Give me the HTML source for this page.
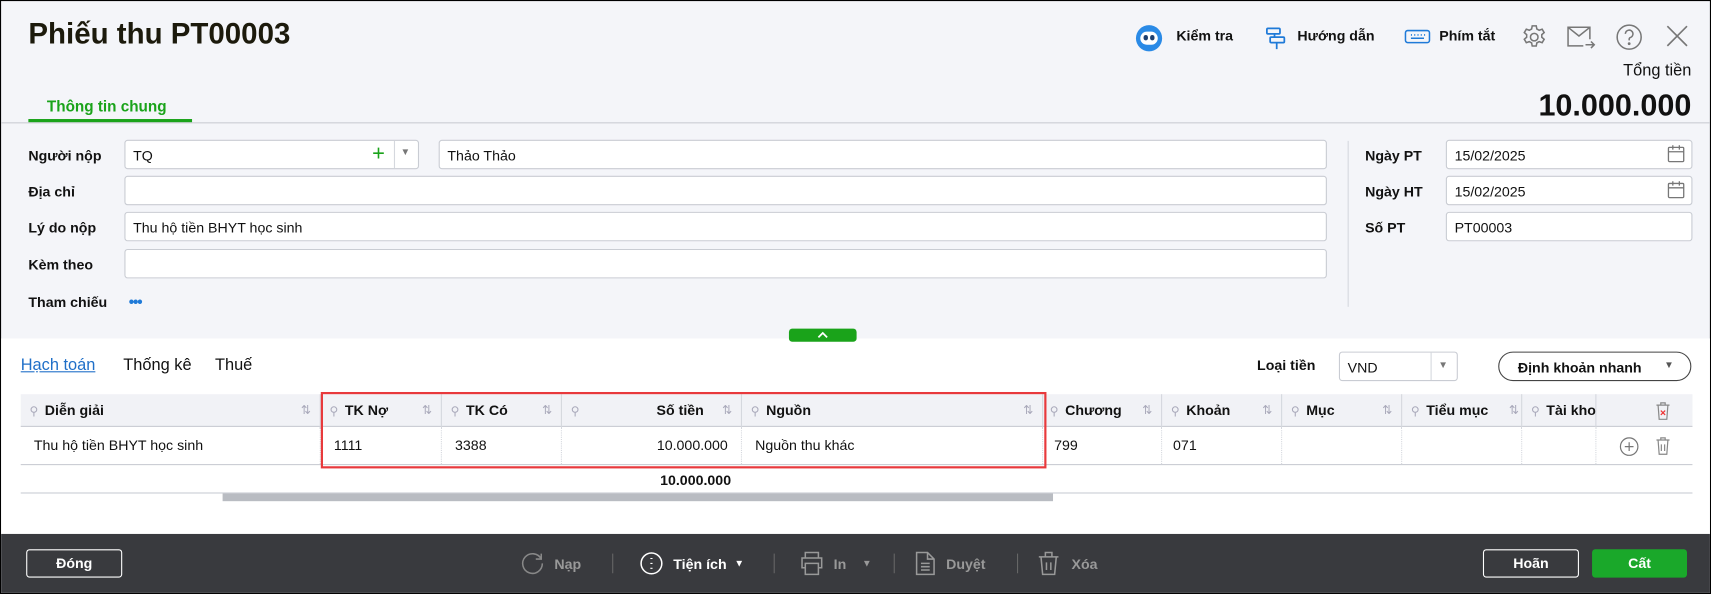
<!DOCTYPE html>
<html><head><meta charset="utf-8"><style>
*{box-sizing:border-box;margin:0;padding:0}
html,body{width:1711px;height:594px;overflow:hidden;background:#000}
#w{position:absolute;left:0;top:0;width:1568px;height:544px;transform:scale(1.0912,1.0919);transform-origin:0 0;background:#f4f5f9;font-family:"Liberation Sans",sans-serif;color:#111;font-size:13px;border:1px solid #000;overflow:hidden}
.a{position:absolute;white-space:nowrap}
.lb{font-weight:bold;font-size:13px}
.in{position:absolute;background:#fff;border:1px solid #c9ccd3;border-radius:3px;height:27px;padding:6px 7px;font-size:13px}
.th{position:absolute;top:0;height:30px;border-right:1px solid #d5d8de;font-weight:bold;font-size:13px;line-height:30px}
.td{position:absolute;top:0;height:34px;border-right:1px dotted #d5d8de;font-size:13px;line-height:34px}
.pin{color:#aab;font-weight:normal;font-size:11px;margin:0 6px 0 8px}
.srt{position:absolute;right:8px;color:#aab;font-weight:normal;font-size:11px}
.ft{color:#fff;font-size:13px;font-weight:bold}
</style></head><body><div id="w">
<div class="a" style="left:25px;top:15px;font-size:27px;font-weight:bold;color:#1c1a0c">Phiếu thu PT00003</div>
<div class="a" style="left:1040px;top:22px;width:24px;height:24px;border-radius:50%;background:#2a8ae6"></div>
<div class="a" style="left:1044px;top:28px;width:16px;height:12px;border-radius:6px;background:#fff"></div>
<div class="a" style="left:1047px;top:31px;width:4px;height:5px;border-radius:2px;background:#1c3f70"></div>
<div class="a" style="left:1053px;top:31px;width:4px;height:5px;border-radius:2px;background:#1c3f70"></div>
<div class="a" style="left:1077px;top:24px;font-size:13px;font-weight:bold">Kiểm tra</div>
<svg class="a" style="left:1156px;top:22px" width="24" height="24" viewBox="0 0 24 24" fill="none" stroke="#1f7ad8" stroke-width="1.6"><rect x="4" y="3" width="12" height="5" rx="1"/><rect x="7" y="11" width="13" height="5" rx="1"/><path d="M11 8v3M13 16v6"/></svg>
<div class="a" style="left:1188px;top:24px;font-weight:bold">Hướng dẫn</div>
<svg class="a" style="left:1286px;top:24px" width="24" height="20" viewBox="0 0 24 20" fill="none" stroke="#1f7ad8" stroke-width="1.4"><rect x="1" y="3" width="22" height="11" rx="2"/><path d="M6 7h1M9 7h1M12 7h1M15 7h1M18 7h1M6 10h12"/></svg>
<div class="a" style="left:1318px;top:24px;font-weight:bold">Phím tắt</div>
<svg class="a" style="left:1392px;top:20px" width="26" height="26" viewBox="0 0 24 24" fill="none" stroke="#777" stroke-width="1.3"><circle cx="12" cy="12" r="3.2"/><path d="M10.3 2.5h3.4l.5 2.6 2 1.1 2.5-.9 1.7 2.9-2 1.7v2.2l2 1.7-1.7 2.9-2.5-.9-2 1.1-.5 2.6h-3.4l-.5-2.6-2-1.1-2.5.9-1.7-2.9 2-1.7v-2.2l-2-1.7 1.7-2.9 2.5.9 2-1.1z"/></svg>
<svg class="a" style="left:1434px;top:20px" width="28" height="26" viewBox="0 0 28 26" fill="none" stroke="#777" stroke-width="1.4"><path d="M22 15V4H2v17h14M2 4l10 8 10-8M18 20h8M23 17l3 3-3 3"/></svg>
<svg class="a" style="left:1479px;top:20px" width="26" height="26" viewBox="0 0 26 26" fill="none" stroke="#777" stroke-width="1.4"><circle cx="13" cy="13" r="11"/><path d="M9.5 10a3.5 3.5 0 1 1 4.5 3.4c-.7.3-1 .8-1 1.6v1"/><circle cx="13" cy="19" r=".6" fill="#777"/></svg>
<svg class="a" style="left:1525px;top:21px" width="22" height="22" viewBox="0 0 22 22" stroke="#777" stroke-width="1.5"><path d="M2 2l18 18M20 2L2 20"/></svg>
<div class="a" style="right:17px;top:55px;font-size:15px">Tổng tiền</div>
<div class="a" style="right:17px;top:80px;font-size:28px;font-weight:bold">10.000.000</div>
<div class="a" style="left:42px;top:88px;font-size:14px;font-weight:bold;color:#1aa31a">Thông tin chung</div>
<div class="a" style="left:25px;top:108px;width:150px;height:3px;background:#1aa31a"></div>
<div class="a" style="left:0;top:111px;width:1568px;height:1px;background:#c9ccd3"></div>
<div class="a lb" style="left:25px;top:134px">Người nộp</div>
<div class="a lb" style="left:25px;top:167px">Địa chỉ</div>
<div class="a lb" style="left:25px;top:200px">Lý do nộp</div>
<div class="a lb" style="left:25px;top:234px">Kèm theo</div>
<div class="a lb" style="left:25px;top:268px">Tham chiếu</div>
<div class="a" style="left:117px;top:267px;color:#1f7ad8;font-size:14px;font-weight:bold;letter-spacing:-1px">•••</div>
<div class="in" style="left:113px;top:127px;width:270px">TQ</div>
<div class="a" style="left:340px;top:128px;color:#1aa31a;font-size:20px;line-height:24px">+</div>
<div class="a" style="left:360px;top:128px;width:1px;height:25px;background:#d5d8de"></div>
<div class="a" style="left:366px;top:133px;color:#777;font-size:9px">▼</div>
<div class="in" style="left:401px;top:127px;width:814px">Thảo Thảo</div>
<div class="in" style="left:113px;top:160px;width:1102px"></div>
<div class="in" style="left:113px;top:193px;width:1102px">Thu hộ tiền BHYT học sinh</div>
<div class="in" style="left:113px;top:227px;width:1102px"></div>
<div class="a" style="left:1234px;top:128px;width:1px;height:152px;background:#d5d8de"></div>
<div class="a lb" style="left:1250px;top:134px">Ngày PT</div>
<div class="a lb" style="left:1250px;top:167px">Ngày HT</div>
<div class="a lb" style="left:1250px;top:200px">Số PT</div>
<div class="in" style="left:1324px;top:127px;width:226px">15/02/2025</div>
<div class="in" style="left:1324px;top:160px;width:226px">15/02/2025</div>
<div class="in" style="left:1324px;top:193px;width:226px">PT00003</div>
<svg class="a" style="left:1526px;top:131px" width="18" height="18" viewBox="0 0 18 18" fill="none" stroke="#777" stroke-width="1.2"><rect x="2" y="3" width="14" height="13" rx="1"/><path d="M2 7h14M6 1v4M12 1v4"/></svg>
<svg class="a" style="left:1526px;top:164px" width="18" height="18" viewBox="0 0 18 18" fill="none" stroke="#777" stroke-width="1.2"><rect x="2" y="3" width="14" height="13" rx="1"/><path d="M2 7h14M6 1v4M12 1v4"/></svg>
<div class="a" style="left:0;top:309px;width:1568px;height:180px;background:#fff"></div>
<div class="a" style="left:722px;top:300px;width:62px;height:12px;border-radius:3px;background:#1aa31a"></div>
<svg class="a" style="left:747px;top:301px" width="12" height="9" viewBox="0 0 12 9" fill="none" stroke="#fff" stroke-width="1.6"><path d="M2 7l4-4 4 4"/></svg>
<div class="a" style="left:18px;top:325px;font-size:15px;color:#1f6fc8;text-decoration:underline">Hạch toán</div>
<div class="a" style="left:112px;top:325px;font-size:15px">Thống kê</div>
<div class="a" style="left:196px;top:325px;font-size:15px">Thuế</div>
<div class="a" style="left:1151px;top:326px;font-size:13px;font-weight:bold">Loại tiền</div>
<div class="in" style="left:1226px;top:321px;width:109px;height:27px">VND</div>
<div class="a" style="left:1310px;top:322px;width:1px;height:25px;background:#d5d8de"></div>
<div class="a" style="left:1317px;top:328px;color:#777;font-size:9px">▼</div>
<div class="a" style="left:1372px;top:321px;width:177px;height:27px;border:1px solid #444;border-radius:14px;padding:6px 0 0 17px;font-weight:bold">Định khoản nhanh</div>
<div class="a" style="left:1524px;top:328px;color:#555;font-size:9px">▼</div>
<div class="a" style="left:18px;top:360px;width:1532px;height:30px;background:#f1f2f6;border-bottom:1px solid #c9ccd3">
<div class="th" style="left:0;width:275px"><span class="pin">⚲</span>Diễn giải<span class="srt">⇅</span></div>
<div class="th" style="left:275px;width:111px"><span class="pin">⚲</span>TK Nợ<span class="srt">⇅</span></div>
<div class="th" style="left:386px;width:110px"><span class="pin">⚲</span>TK Có<span class="srt">⇅</span></div>
<div class="th" style="left:496px;width:165px"><span class="pin">⚲</span><span style="position:absolute;right:34px">Số tiền</span><span class="srt">⇅</span></div>
<div class="th" style="left:661px;width:276px"><span class="pin">⚲</span>Nguồn<span class="srt">⇅</span></div>
<div class="th" style="left:937px;width:109px"><span class="pin" style="margin-left:6px">⚲</span>Chương<span class="srt">⇅</span></div>
<div class="th" style="left:1046px;width:110px"><span class="pin">⚲</span>Khoản<span class="srt">⇅</span></div>
<div class="th" style="left:1156px;width:110px"><span class="pin">⚲</span>Mục<span class="srt">⇅</span></div>
<div class="th" style="left:1266px;width:110px"><span class="pin">⚲</span>Tiểu mục<span class="srt" style="right:2px">⇅</span></div>
<div class="th" style="left:1376px;width:68px;overflow:hidden"><span class="pin">⚲</span>Tài khoản</div>
<svg class="a" style="left:1498px;top:6px" width="14" height="18" viewBox="0 0 14 18" fill="none" stroke="#888" stroke-width="1.1"><path d="M1 4h12M5 4V2h4v2M2.5 4l1 13h7l1-13"/><path d="M5 9l4 4M9 9l-4 4" stroke="#e33"/></svg>
</div>
<div class="a" style="left:18px;top:390px;width:1532px;height:35px;border-bottom:1px solid #c9ccd3">
<div class="td" style="left:0;width:275px;padding-left:12px">Thu hộ tiền BHYT học sinh</div>
<div class="td" style="left:275px;width:111px;padding-left:12px">1111</div>
<div class="td" style="left:386px;width:110px;padding-left:12px">3388</div>
<div class="td" style="left:496px;width:165px;text-align:right;padding-right:12px">10.000.000</div>
<div class="td" style="left:661px;width:276px;padding-left:12px">Nguồn thu khác</div>
<div class="td" style="left:937px;width:109px;padding-left:10px">799</div>
<div class="td" style="left:1046px;width:110px;padding-left:10px">071</div>
<div class="td" style="left:1156px;width:110px"></div>
<div class="td" style="left:1266px;width:110px"></div>
<div class="td" style="left:1376px;width:68px"></div>
<svg class="a" style="left:1465px;top:9px" width="18" height="18" viewBox="0 0 18 18" fill="none" stroke="#777" stroke-width="1.1"><circle cx="9" cy="9" r="8"/><path d="M9 5v8M5 9h8"/></svg>
<svg class="a" style="left:1498px;top:8px" width="14" height="18" viewBox="0 0 14 18" fill="none" stroke="#888" stroke-width="1.1"><path d="M1 4h12M5 4V2h4v2M2.5 4l1 13h7l1-13M5.5 8v6M8.5 8v6"/></svg>
</div>
<div class="a" style="left:293px;top:358px;width:665px;height:70px;border:2px solid #e8393c"></div>
<div class="a" style="left:514px;top:431px;width:155px;text-align:right;font-weight:bold">10.000.000</div>
<div class="a" style="left:18px;top:450px;width:1532px;height:1px;background:#c9ccd3"></div>
<div class="a" style="left:203px;top:451px;width:761px;height:7px;background:#b9bcc2"></div>
<div class="a" style="left:0;top:488px;width:1568px;height:56px;background:#393a3e"></div>
<div class="a ft" style="left:23px;top:502px;width:88px;height:26px;border:1px solid #fff;border-radius:3px;text-align:center;line-height:24px">Đóng</div>
<svg class="a" style="left:476px;top:504px" width="22" height="22" viewBox="0 0 22 22" fill="none" stroke="#888" stroke-width="1.4"><path d="M19 7A9 9 0 1 0 20 11M19 2v5h-5"/></svg>
<div class="a" style="left:507px;top:508px;color:#999;font-weight:bold">Nạp</div>
<div class="a" style="left:560px;top:506px;width:1px;height:18px;background:#666"></div>
<svg class="a" style="left:585px;top:504px" width="22" height="22" viewBox="0 0 22 22" fill="none" stroke="#fff" stroke-width="1.4"><circle cx="11" cy="11" r="9.5"/><path d="M11 6v1M11 10.5v1M11 15v1" stroke-width="2"/></svg>
<div class="a ft" style="left:616px;top:508px">Tiện ích</div>
<div class="a" style="left:672px;top:510px;color:#fff;font-size:9px">▼</div>
<div class="a" style="left:708px;top:506px;width:1px;height:18px;background:#666"></div>
<svg class="a" style="left:732px;top:503px" width="22" height="24" viewBox="0 0 22 24" fill="none" stroke="#999" stroke-width="1.4"><path d="M5 7V2h12v5M5 16H2V7h18v9h-3M5 12h12v10H5z"/></svg>
<div class="a" style="left:763px;top:508px;color:#999;font-weight:bold">In</div>
<div class="a" style="left:789px;top:510px;color:#999;font-size:9px">▼</div>
<div class="a" style="left:818px;top:506px;width:1px;height:18px;background:#666"></div>
<svg class="a" style="left:837px;top:503px" width="20" height="24" viewBox="0 0 20 24" fill="none" stroke="#999" stroke-width="1.4"><path d="M2 2h10l6 6v14H2zM12 2v6h6M6 12h8M6 15h8M6 18h8"/></svg>
<div class="a" style="left:866px;top:508px;color:#999;font-weight:bold">Duyệt</div>
<div class="a" style="left:931px;top:506px;width:1px;height:18px;background:#666"></div>
<svg class="a" style="left:950px;top:503px" width="20" height="24" viewBox="0 0 20 24" fill="none" stroke="#999" stroke-width="1.4"><path d="M1 6h18M7 6V2h6v4M3 6l1.5 16h11L17 6M8 11v7M12 11v7"/></svg>
<div class="a" style="left:981px;top:508px;color:#999;font-weight:bold">Xóa</div>
<div class="a ft" style="left:1358px;top:502px;width:88px;height:26px;border:1px solid #fff;border-radius:3px;text-align:center;line-height:24px">Hoãn</div>
<div class="a ft" style="left:1458px;top:502px;width:87px;height:26px;background:#1aa82a;border-radius:3px;text-align:center;line-height:26px">Cất</div>
</div></body></html>
